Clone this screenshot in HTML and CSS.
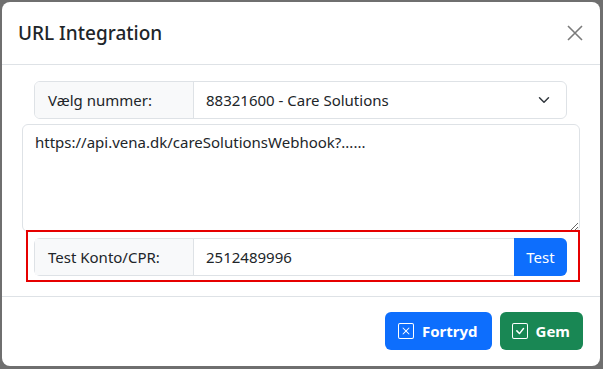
FILE: index.html
```html
<!DOCTYPE html>
<html lang="da">
<head>
    <meta charset="UTF-8">
    <meta name="viewport" content="width=device-width, initial-scale=1.0">
    <title>URL Integration</title>
    <link rel="stylesheet" href="styles.css">
</head>
<body>

    <div class="modal">
        <div class="modal-header">
            <h5 class="modal-title">URL Integration</h5>
            <button class="btn-close" type="button" aria-label="Close">
                <svg viewBox="0 0 16 16" width="16" height="16"><path d="M1 1L15 15M15 1L1 15" stroke="currentColor" stroke-width="1.6" fill="none"/></svg>
            </button>
        </div>

        <div class="modal-body">
            <div class="input-group select-group">
                <span class="addon">Vælg nummer:</span>
                <div class="select">
                    <span>88321600 - Care Solutions</span>
                    <svg viewBox="0 0 16 16" width="12" height="12"><path d="M2 5l6 6 6-6" stroke="#343a40" stroke-width="2" stroke-linecap="round" stroke-linejoin="round" fill="none"/></svg>
                </div>
            </div>

            <textarea class="url-box">https://api.vena.dk/careSolutionsWebhook?......</textarea>

            <div class="test-frame">
                <div class="input-group">
                    <span class="addon">Test Konto/CPR:</span>
                    <input type="text" class="field" value="2512489996">
                    <button class="btn btn-primary btn-test" type="button">Test</button>
                </div>
            </div>
        </div>

        <div class="modal-footer">
            <button class="btn btn-primary btn-action" type="button">
                <svg viewBox="0 0 16 16" width="16" height="16"><path fill="currentColor" d="M14 1a1 1 0 0 1 1 1v12a1 1 0 0 1-1 1H2a1 1 0 0 1-1-1V2a1 1 0 0 1 1-1zM2 0a2 2 0 0 0-2 2v12a2 2 0 0 0 2 2h12a2 2 0 0 0 2-2V2a2 2 0 0 0-2-2z"/><path fill="currentColor" d="M4.65 4.65a.5.5 0 0 1 .7 0L8 7.290l2.650-2.640a.5.5 0 0 1 .7.7L8.710 8l2.640 2.650a.5.5 0 0 1-.7.7L8 8.710l-2.650 2.640a.5.5 0 0 1-.7-.7L7.290 8 4.650 5.350a.5.5 0 0 1 0-.7"/></svg>
                Fortryd
            </button>
            <button class="btn btn-success btn-action btn-save" type="button">
                <svg viewBox="0 0 16 16" width="16" height="16"><path fill="currentColor" d="M14 1a1 1 0 0 1 1 1v12a1 1 0 0 1-1 1H2a1 1 0 0 1-1-1V2a1 1 0 0 1 1-1zM2 0a2 2 0 0 0-2 2v12a2 2 0 0 0 2 2h12a2 2 0 0 0 2-2V2a2 2 0 0 0-2-2z"/><path fill="currentColor" d="M10.97 4.97a.75.75 0 0 1 1.07 1.05l-3.99 4.99a.75.75 0 0 1-1.08.02L4.32 8.38a.75.75 0 1 1 1.06-1.06l2.09 2.1 3.47-4.42z"/></svg>
                Gem
            </button>
        </div>
    </div>

</body>
</html>
```

FILE: styles.css
```css
/* Backdrop */
body {
    margin: 0;
    padding: 2px 3px 3px 2px;
    background-color: #6f6f6f;
    font-family: "Noto Sans", "Open Sans", sans-serif;
    color: #212529;
    height: 100vh;
    box-sizing: border-box;
}

/* Dialog */
.modal {
    background-color: #fff;
    border-radius: 8px;
    height: 100%;
    display: flex;
    flex-direction: column;
    overflow: hidden;
}

.modal-header {
    display: flex;
    align-items: center;
    justify-content: space-between;
    padding: 16px;
    border-bottom: 1px solid #dee2e6;
}

.modal-title {
    margin: 0;
    font-size: 19px;
    font-weight: 500;
    line-height: 30px;
}

.btn-close {
    border: 0;
    background: none;
    padding: 0;
    margin-right: 1px;
    color: #7b7b7b;
    display: flex;
}

/* Body */
.modal-body {
    padding: 16px 20px 14px 20px;
    display: flex;
    flex-direction: column;
}

.input-group {
    display: flex;
    height: 38px;
    font-size: 15px;
}

.select-group {
    margin: 0 13px 0 12px;
    border: 1px solid #dee2e6;
    border-radius: 6px;
    box-sizing: border-box;
    overflow: hidden;
}

.addon {
    width: 159px;
    flex-shrink: 0;
    box-sizing: border-box;
    padding: 0 12px 0 13px;
    display: flex;
    align-items: center;
    background-color: #f8f9fa;
    border-right: 1px solid #dee2e6;
}

.select {
    flex: 1;
    display: flex;
    align-items: center;
    justify-content: space-between;
    padding: 0 16px 0 12px;
}

.url-box {
    margin: 5px 0 0 0;
    height: 108px;
    padding: 7px 12px;
    border: 1px solid #dee2e6;
    border-radius: 6px;
    font-family: inherit;
    font-size: 15px;
    color: #212529;
    box-sizing: border-box;
}

/* Highlighted test row */
.test-frame {
    margin: -2px 0 0 4px;
    border: 2px solid #e60000;
    padding: 6px 11px 4px 6px;
}

.test-frame .input-group {
    border: 1px solid #dee2e6;
    border-radius: 6px;
    box-sizing: border-box;
}

.field {
    flex: 1;
    min-width: 0;
    border: 0;
    padding: 0 12px;
    font-family: inherit;
    font-size: 15px;
    color: #212529;
    background: #fff;
}

.btn {
    border: 0;
    font-family: inherit;
    color: #fff;
    border-radius: 6px;
    cursor: pointer;
}

.btn-primary { background-color: #0d6efd; }
.btn-success { background-color: #198754; }

.btn-test {
    width: 53px;
    margin: -1px -1px -1px 0;
    font-size: 15px;
    border-radius: 0 6px 6px 0;
}

/* Footer */
.modal-footer {
    margin-top: auto;
    display: flex;
    justify-content: flex-end;
    gap: 8px;
    padding: 15px 17px 18px;
    border-top: 1px solid #dee2e6;
}

.btn-action {
    height: 38px;
    padding: 0 14px 0 13px;
    display: flex;
    align-items: center;
    gap: 8px;
    font-size: 15px;
    font-weight: 700;
}

.btn-save {
    padding: 0 13px 0 12px;
}
```
